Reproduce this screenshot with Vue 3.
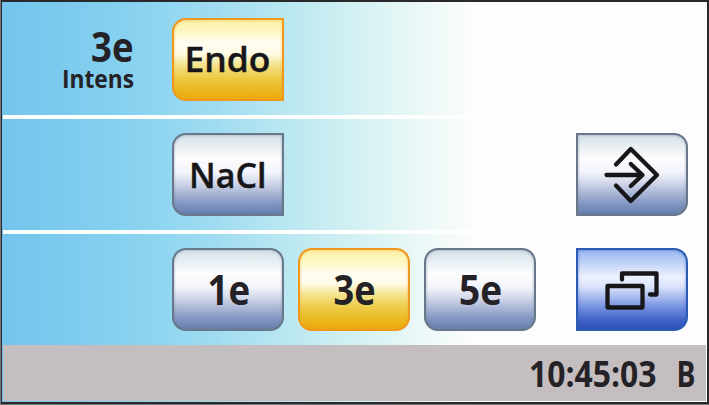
<script setup>
const rows = [
  {
    id: 'mode',
    status: true,
    buttons: [{ label: 'Endo', tone: 'gold', shape: 'tab-left', x: 12.5, y: 53, w: 86, size: 33.5 }],
    icon: null
  },
  {
    id: 'fluid',
    status: false,
    buttons: [{ label: 'NaCl', tone: 'steel', shape: 'tab-left', x: 17, y: 54, w: 77.5, size: 34 }],
    icon: 'enter'
  },
  {
    id: 'electrodes',
    status: false,
    buttons: [
      { label: '1e', tone: 'steel', shape: 'round', x: 35.5, y: 56, w: 42.5, size: 42, bold: true },
      { label: '3e', tone: 'gold', shape: 'round', x: 35.5, y: 56, w: 42, size: 42, bold: true },
      { label: '5e', tone: 'steel', shape: 'round', x: 35, y: 56, w: 43, size: 42, bold: true }
    ],
    icon: 'windows'
  }
]
</script>

<template>
  <main class="screen">
    <section v-for="row in rows" :key="row.id" class="row" :class="row.id">
      <div class="status">
        <svg v-if="row.status" width="80" height="70" viewBox="0 0 80 70">
          <text class="bold" x="34" y="37" font-size="42" textLength="42.5" lengthAdjust="spacingAndGlyphs">3e</text>
          <text class="bold" x="5" y="62.5" font-size="25.5" textLength="72" lengthAdjust="spacingAndGlyphs">Intens</text>
        </svg>
      </div>
      <div class="choices">
        <button v-for="b in row.buttons" :key="b.label" class="key" :class="[b.tone, b.shape]">
          <svg width="108" height="78" viewBox="2 2 108 78">
            <text :class="b.bold ? 'bold' : 'medium'" :x="b.x" :y="b.y" :font-size="b.size" :textLength="b.w" lengthAdjust="spacingAndGlyphs">{{ b.label }}</text>
          </svg>
        </button>
      </div>
      <button v-if="row.icon === 'enter'" class="key steel tab-right" aria-label="Enter">
        <svg class="icon" width="108" height="78" viewBox="2 2 108 78">
          <path d="M40 30.5 L54.8 15 L81 41 L54.8 67 L40 51.5 M30.5 41 H66 M54.8 30 L66.5 41 L54.8 52" />
        </svg>
      </button>
      <button v-if="row.icon === 'windows'" class="key blue tab-right" aria-label="Windows">
        <svg class="icon" width="108" height="78" viewBox="2 2 108 78">
          <rect x="31.5" y="37" width="35" height="21.5" />
          <path d="M46 30.5 V24.5 H80.5 V45.5 H74" />
        </svg>
      </button>
    </section>
    <footer class="bar">
      <svg width="180" height="56" viewBox="0 0 180 56">
        <text class="bold" x="3" y="41.5" font-size="35" textLength="127.5" lengthAdjust="spacingAndGlyphs">10:45:03</text>
        <text class="bold" x="150.5" y="41.5" font-size="35" textLength="19" lengthAdjust="spacingAndGlyphs">B</text>
      </svg>
    </footer>
  </main>
</template>

<style>
body {
  margin: 0;
  background: #77777a;
}
</style>

<style scoped>
.screen {
  box-sizing: border-box;
  width: 708px;
  height: 404px;
  margin-left: 1px;
  padding: 1px;
  border: solid #29282b;
  border-width: 2px 2px 2px 1px;
  display: flex;
  flex-direction: column;
  overflow: hidden;
  background: linear-gradient(90deg, #73c4ee 0, #7dcbee 70px, #8bd4f0 145px, #a0dcf1 215px, #b9e7f1 282px, #d2f0f3 350px, #e8f7f6 410px, #fdfdfd 475px);
  font-family: "Open Sans", "Noto Sans", sans-serif;
}
.row {
  flex: 0 0 111px;
  box-sizing: border-box;
  padding-top: 14px;
  padding-right: 18px;
  display: flex;
  align-items: flex-start;
  border-top: 4px solid #fdfefe;
}
.row.mode {
  flex-basis: 112px;
  border-top: 0;
  padding-top: 15px;
}
.row.fluid,
.row.electrodes {
  flex-basis: 115px;
}
.status {
  width: 169px;
  flex: none;
}
.status svg {
  margin: 7px 0 0 54px;
}
.choices {
  display: flex;
  gap: 14px;
  flex: 1;
}
.key {
  box-sizing: border-box;
  width: 112px;
  height: 83px;
  flex: none;
  padding: 0;
  border: 2px solid;
  overflow: hidden;
  font-family: inherit;
}
svg {
  display: block;
  overflow: visible;
}
.round {
  border-radius: 14px;
}
.tab-left {
  border-radius: 14px 0 0 14px;
}
.tab-right {
  border-radius: 0 14px 14px 0;
}
.steel {
  border-color: #68788a;
  background: linear-gradient(#d3e1e8 0, #e9eff3 15%, #fdfdfe 30%, #f4f5fb 47%, #d3d9eb 60%, #acb8d7 73%, #8396c2 87%, #6580b0 100%);
  box-shadow: inset 0 0 3px #70809490;
}
.gold {
  border-color: #f0981c;
  background: linear-gradient(#fdf0a5 0, #fdf7c4 15%, #fffdf2 30%, #fffbe5 43%, #f5e38c 57%, #edcb45 73%, #e9b922 87%, #eca90b 100%);
  box-shadow: inset 0 0 3px #f3a93590;
}
.blue {
  border-color: #2c5bb4;
  background: linear-gradient(#98b5ef 0, #bdcff7 15%, #edf1fe 34%, #dce5fc 46%, #a6b9ef 60%, #6f8cdd 74%, #4465c9 88%, #2f50b7 100%);
  box-shadow: inset 0 0 3px #2455b790;
}
text {
  fill: #242226;
}
.bold {
  font-weight: 700;
}
.medium {
  font-weight: 600;
  fill: #171719;
  stroke: #171719;
  stroke-width: 0.4;
}
.icon {
  fill: none;
  stroke: #171719;
  stroke-width: 4.3;
  stroke-linecap: round;
  stroke-linejoin: round;
}
.bar {
  flex: 1;
  display: flex;
  justify-content: flex-end;
  background: #c4bec0;
}
</style>
